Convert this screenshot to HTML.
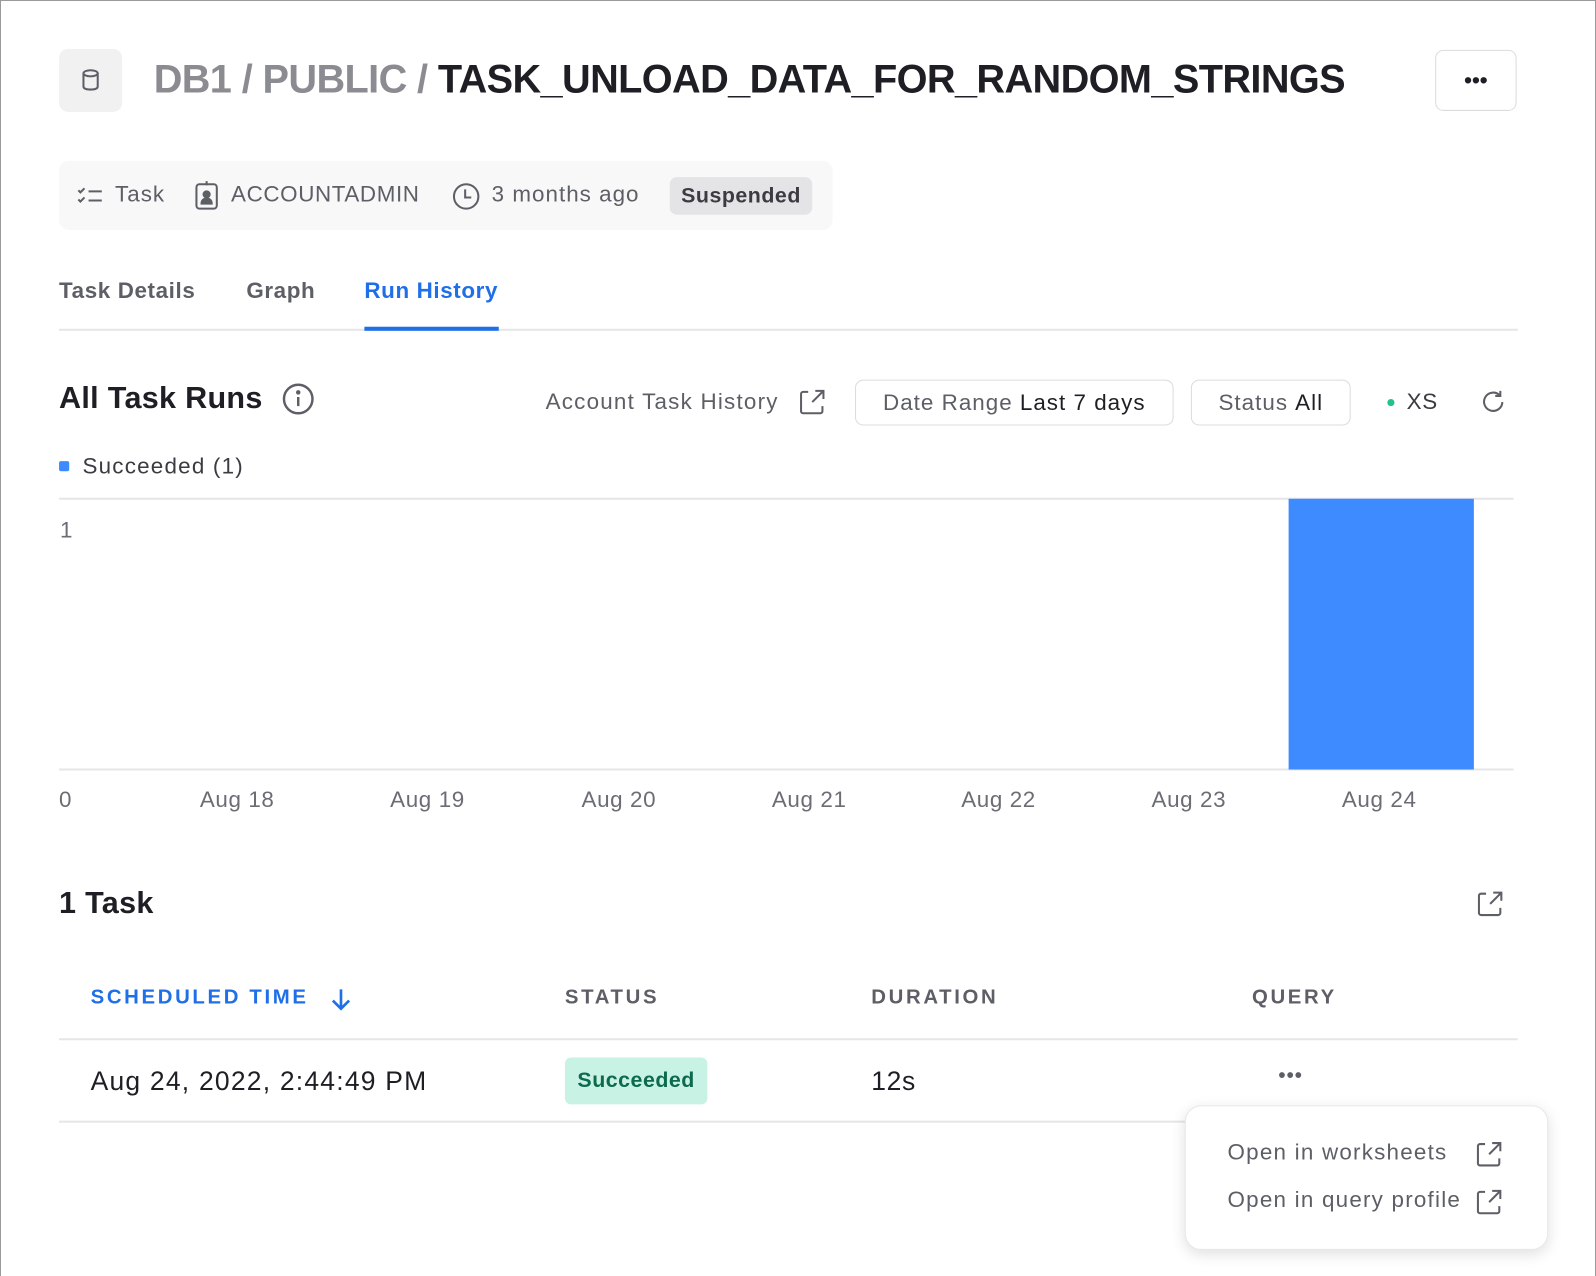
<!DOCTYPE html><html><head><meta charset="utf-8"><style>
*{box-sizing:border-box;margin:0;padding:0}
body{width:1596px;height:1276px;overflow:hidden;background:#fff;font-family:"Liberation Sans",sans-serif;color:#1e1f24}
#w{position:absolute;left:0;top:0;width:1568px;height:1254px;transform:scale(1.01786);transform-origin:0 0;border:1.5px solid #9a9a9a;border-bottom:none;letter-spacing:0.6px}
.a{position:absolute;white-space:nowrap}
.g{color:#5d5f66}
.btn{position:absolute;border:1.5px solid #dcdcdf;border-radius:8px;font-size:22px;color:#5d5f66;display:flex;align-items:center;justify-content:center}
.btn b{color:#1e1f24;font-weight:normal;margin-left:7px}
.line{position:absolute;height:2px;background:#e6e6e8}
.xl{position:absolute;top:772px;font-size:22px;color:#6b6d74;transform:translateX(-50%)}
.h{position:absolute;top:968px;font-size:20px;letter-spacing:2.6px;font-weight:bold;color:#5d5f66}
svg{position:absolute}
</style></head><body><div id="w">
<div class="a" style="left:57px;top:47px;width:62px;height:62px;background:#f1f1f2;border-radius:9px"></div>
<svg style="left:77px;top:66px" width="22" height="24" viewBox="0 0 22 24" fill="none" stroke="#5d5f66" stroke-width="2"><ellipse cx="11" cy="5" rx="7" ry="3"/><path d="M4 5v13c0 2 3 3 7 3s7-1 7-3V5"/></svg>
<div class="a" style="left:150px;top:56px;font-size:39px;font-weight:bold;letter-spacing:-0.6px"><span style="color:#8b8c91">DB1 / PUBLIC / </span>TASK_UNLOAD_DATA_FOR_RANDOM_STRINGS</div>
<div class="btn" style="left:1409px;top:48px;width:80px;height:60px;font-size:22px;color:#1e1f24;font-weight:bold;letter-spacing:0">•••</div>

<div class="a" style="left:57px;top:157px;width:760px;height:68px;background:#f8f8f9;border-radius:10px"></div>
<svg style="left:75px;top:181px" width="26" height="20" viewBox="0 0 26 20" fill="none" stroke="#5d5f66" stroke-width="2"><path d="M1 5l2 2 4-4M1 14l2 2 4-4M11 6h13M11 15h13"/></svg>
<div class="a g" style="left:112px;top:177px;font-size:22px;letter-spacing:1px">Task</div>
<svg style="left:190px;top:176px" width="24" height="30" viewBox="0 0 24 30" fill="none" stroke="#5d5f66" stroke-width="2"><rect x="2" y="4" width="20" height="24" rx="3"/><path d="M12 1v4"/><circle cx="12" cy="14" r="3" fill="#5d5f66"/><path d="M7 23c0-3 2-5 5-5s5 2 5 5z" fill="#5d5f66"/></svg>
<div class="a g" style="left:226px;top:177px;font-size:22px;letter-spacing:0.6px">ACCOUNTADMIN</div>
<svg style="left:443px;top:178px" width="28" height="28" viewBox="0 0 28 28" fill="none" stroke="#5d5f66" stroke-width="2"><circle cx="14" cy="14" r="12"/><path d="M13 7v8h6"/></svg>
<div class="a g" style="left:482px;top:177px;font-size:22px;letter-spacing:1px">3 months ago</div>
<div class="a" style="left:657px;top:173px;width:140px;height:37px;background:#e4e4e6;border-radius:7px;font-size:21px;font-weight:bold;color:#3a3c42;text-align:center;line-height:37px;letter-spacing:0.5px">Suspended</div>

<div class="a" style="left:57px;top:272px;font-size:22px;font-weight:bold;color:#5d5f66">Task Details</div>
<div class="a" style="left:241px;top:272px;font-size:22px;font-weight:bold;color:#5d5f66">Graph</div>
<div class="a" style="left:357px;top:272px;font-size:22px;font-weight:bold;color:#1f6fe8">Run History</div>
<div class="line" style="left:57px;top:322px;width:1433px"></div>
<div class="a" style="left:357px;top:320px;width:132px;height:4px;background:#1f6fe8"></div>

<div class="a" style="left:57px;top:374px;font-size:30px;font-weight:bold;letter-spacing:0.3px">All Task Runs</div>
<svg style="left:276px;top:375px" width="32" height="32" viewBox="0 0 32 32" fill="none" stroke="#5d5f66" stroke-width="2.4"><circle cx="16" cy="16" r="14"/><path d="M16 14v9"/><circle cx="16" cy="9.5" r="1" fill="#5d5f66"/></svg>
<div class="a g" style="left:535px;top:381px;font-size:22px;letter-spacing:1.2px">Account Task History</div>
<svg style="left:784px;top:381px" width="26" height="26" viewBox="0 0 26 26" fill="none" stroke="#5d5f66" stroke-width="2"><path d="M9 3H4a2 2 0 0 0-2 2v17a2 2 0 0 0 2 2h17a2 2 0 0 0 2-2v-5M13 13L24 2M16 2h8v8"/></svg>
<div class="btn" style="left:839px;top:372px;width:313px;height:45px;letter-spacing:1px">Date Range<b>Last 7 days</b></div>
<div class="btn" style="left:1169px;top:372px;width:157px;height:45px;letter-spacing:1px">Status<b>All</b></div>
<div class="a" style="left:1362px;top:391px;width:7px;height:7px;border-radius:50%;background:#23c28a"></div>
<div class="a" style="left:1381px;top:381px;font-size:22px;color:#3a3c42">XS</div>
<svg style="left:1453px;top:381px" width="26" height="26" viewBox="0 0 26 26" fill="none" stroke="#5d5f66" stroke-width="2"><path d="M22 13a9 9 0 1 1-3-7"/><path d="M20 2v5h-5"/></svg>

<div class="a" style="left:57px;top:452px;width:10px;height:10px;border-radius:2px;background:#3d8bff"></div>
<div class="a" style="left:80px;top:444px;font-size:22px;color:#3a3c42;letter-spacing:1.2px">Succeeded (1)</div>
<div class="line" style="left:57px;top:488px;width:1429px;height:1.5px"></div>
<div class="line" style="left:57px;top:754px;width:1429px;height:1.5px"></div>
<div class="a" style="left:1265px;top:489px;width:182px;height:266px;background:#3d8bff"></div>
<div class="a" style="left:58px;top:507px;font-size:22px;color:#6b6d74">1</div>
<div class="a" style="left:57px;top:772px;font-size:22px;color:#6b6d74">0</div>
<div class="xl" style="left:232px">Aug 18</div><div class="xl" style="left:419px">Aug 19</div><div class="xl" style="left:607px">Aug 20</div><div class="xl" style="left:794px">Aug 21</div><div class="xl" style="left:980px">Aug 22</div><div class="xl" style="left:1167px">Aug 23</div><div class="xl" style="left:1354px">Aug 24</div>

<div class="a" style="left:57px;top:870px;font-size:30px;font-weight:bold;letter-spacing:0.3px">1 Task</div>
<svg style="left:1450px;top:874px" width="26" height="26" viewBox="0 0 26 26" fill="none" stroke="#5d5f66" stroke-width="2"><path d="M9 3H4a2 2 0 0 0-2 2v17a2 2 0 0 0 2 2h17a2 2 0 0 0 2-2v-5M13 13L24 2M16 2h8v8"/></svg>
<div class="h" style="left:88px;color:#1f6fe8">SCHEDULED TIME</div>
<svg style="left:323px;top:969px" width="22" height="24" viewBox="0 0 22 24" fill="none" stroke="#1f6fe8" stroke-width="2.6"><path d="M11 2v19M3 13l8 8 8-8"/></svg>
<div class="h" style="left:554px">STATUS</div>
<div class="h" style="left:855px">DURATION</div>
<div class="h" style="left:1229px">QUERY</div>
<div class="line" style="left:57px;top:1019px;width:1433px"></div>
<div class="a" style="left:88px;top:1046px;font-size:26px;letter-spacing:1.2px">Aug 24, 2022, 2:44:49 PM</div>
<div class="a" style="left:554px;top:1038px;width:140px;height:46px;background:#c8f2e4;border-radius:6px;font-size:21px;font-weight:bold;color:#0d6a4c;text-align:center;line-height:46px;letter-spacing:0.5px">Succeeded</div>
<div class="a" style="left:855px;top:1046px;font-size:26px">12s</div>
<div class="a" style="left:1255px;top:1045px;font-size:20px;font-weight:bold;color:#5d5f66;letter-spacing:1px">•••</div>
<div class="line" style="left:57px;top:1100px;width:1433px"></div>

<div class="a" style="left:1163px;top:1085px;width:357px;height:142px;background:#fff;border:1.5px solid #e8e8ea;border-radius:16px;box-shadow:0 4px 14px rgba(0,0,0,.12)"></div>
<div class="a g" style="left:1205px;top:1118px;font-size:22px;letter-spacing:1.2px">Open in worksheets</div>
<div class="a g" style="left:1205px;top:1165px;font-size:22px;letter-spacing:1.2px">Open in query profile</div>
<svg style="left:1449px;top:1120px" width="26" height="26" viewBox="0 0 26 26" fill="none" stroke="#5d5f66" stroke-width="2"><path d="M9 3H4a2 2 0 0 0-2 2v17a2 2 0 0 0 2 2h17a2 2 0 0 0 2-2v-5M13 13L24 2M16 2h8v8"/></svg>
<svg style="left:1449px;top:1167px" width="26" height="26" viewBox="0 0 26 26" fill="none" stroke="#5d5f66" stroke-width="2"><path d="M9 3H4a2 2 0 0 0-2 2v17a2 2 0 0 0 2 2h17a2 2 0 0 0 2-2v-5M13 13L24 2M16 2h8v8"/></svg>
</div></body></html>
